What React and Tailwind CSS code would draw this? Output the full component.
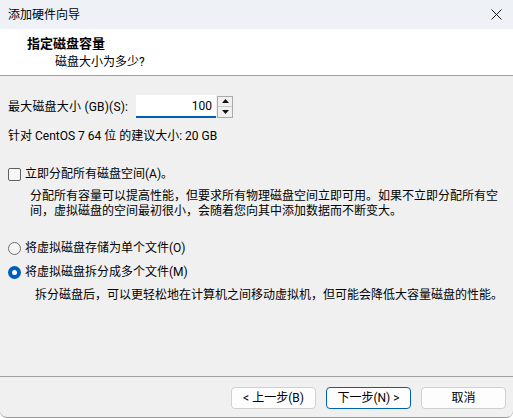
const font = "font-['Roboto','Noto_Sans_CJK_SC',sans-serif]";

function Radio({ checked }) {
  if (checked) {
    return (
      <span className="flex h-[13px] w-[13px] items-center justify-center rounded-full bg-[#005fb8]">
        <span className="h-[5px] w-[5px] rounded-full bg-white" />
      </span>
    );
  }
  return <span className="h-[13px] w-[13px] rounded-full border border-[#6e6e6e] bg-[#f5f5f5]" />;
}

function Button({ children, primary }) {
  return (
    <button
      className={`h-[22px] w-[85px] rounded-[4px] bg-[#fdfdfd] text-[12px] leading-none text-black ${
        primary ? 'border border-[#005fb8]' : 'border border-[#d0d0d0]'
      }`}
    >
      {children}
    </button>
  );
}

export default function App() {
  return (
    <div className={`flex h-[418px] w-[513px] flex-col overflow-hidden rounded-b-[7px] border-b border-[#9a9a9a] bg-[#f0f0f0] text-[12px] text-black ${font}`}>
      {/* Title bar */}
      <div className="flex h-[29px] shrink-0 items-center justify-between bg-[#eef2f7] pl-[8px] pr-[10px]">
        <span className="leading-none">添加硬件向导</span>
        <svg width="11" height="11" viewBox="0 0 11 11" className="mr-[1px]">
          <path d="M0.5 0.5 L10.5 10.5 M10.5 0.5 L0.5 10.5" stroke="#1a1a1a" strokeWidth="1" />
        </svg>
      </div>

      {/* Header */}
      <div className="h-[47px] shrink-0 border-b border-[#a0a0a0] bg-white pl-[27px] pt-[5px]">
        <div className="text-[13px] font-bold leading-[19px]">指定磁盘容量</div>
        <div className="pl-[28px] leading-[18px]">磁盘大小为多少?</div>
      </div>

      {/* Body */}
      <div className="flex-1 px-[8px] pt-[19px]">
        <div className="flex items-center">
          <span className="w-[128px] tracking-[0.2px]">最大磁盘大小 (GB)(S):</span>
          <div className="flex h-[23px] w-[80px] items-center justify-end border-b-2 border-[#005fb8] bg-white pr-[4px]">
            100
          </div>
          <div className="ml-[1px] flex h-[22px] w-[16px] flex-col border border-[#a9a9a9] bg-[#f0f0f0]">
            <div className="flex flex-1 items-center justify-center border-b border-[#c8c8c8]">
              <svg width="7" height="4" viewBox="0 0 7 4">
                <path d="M3.5 0 L7 4 L0 4 Z" fill="#111" />
              </svg>
            </div>
            <div className="flex flex-1 items-center justify-center">
              <svg width="7" height="4" viewBox="0 0 7 4">
                <path d="M0 0 L7 0 L3.5 4 Z" fill="#111" />
              </svg>
            </div>
          </div>
        </div>
        <div className="mt-[10px] leading-[16px]">针对 CentOS 7 64 位 的建议大小: 20 GB</div>

        <div className="mt-[21px] flex items-center gap-[4px]">
          <span className="h-[13px] w-[13px] rounded-[2px] border border-[#5f5f5f] bg-[#f7f7f7]" />
          <span>立即分配所有磁盘空间(A)。</span>
        </div>
        <div className="mt-[6px] pl-[22px] leading-[15px]">
          分配所有容量可以提高性能，但要求所有物理磁盘空间立即可用。如果不立即分配所有空
          <br />
          间，虚拟磁盘的空间最初很小，会随着您向其中添加数据而不断变大。
        </div>

        <div className="mt-[20px] flex items-center gap-[4px]">
          <Radio />
          <span>将虚拟磁盘存储为单个文件(O)</span>
        </div>
        <div className="mt-[6px] flex items-center gap-[4px]">
          <Radio checked />
          <span>将虚拟磁盘拆分成多个文件(M)</span>
        </div>
        <div className="mt-[5px] pl-[27px]">拆分磁盘后，可以更轻松地在计算机之间移动虚拟机，但可能会降低大容量磁盘的性能。</div>
      </div>

      {/* Footer */}
      <div className="flex h-[41px] shrink-0 items-start justify-end gap-[10px] border-t border-[#a0a0a0] pr-[7px] pt-[10px]">
        <Button>&lt; 上一步(B)</Button>
        <Button primary>下一步(N) &gt;</Button>
        <Button>取消</Button>
      </div>
    </div>
  );
}
